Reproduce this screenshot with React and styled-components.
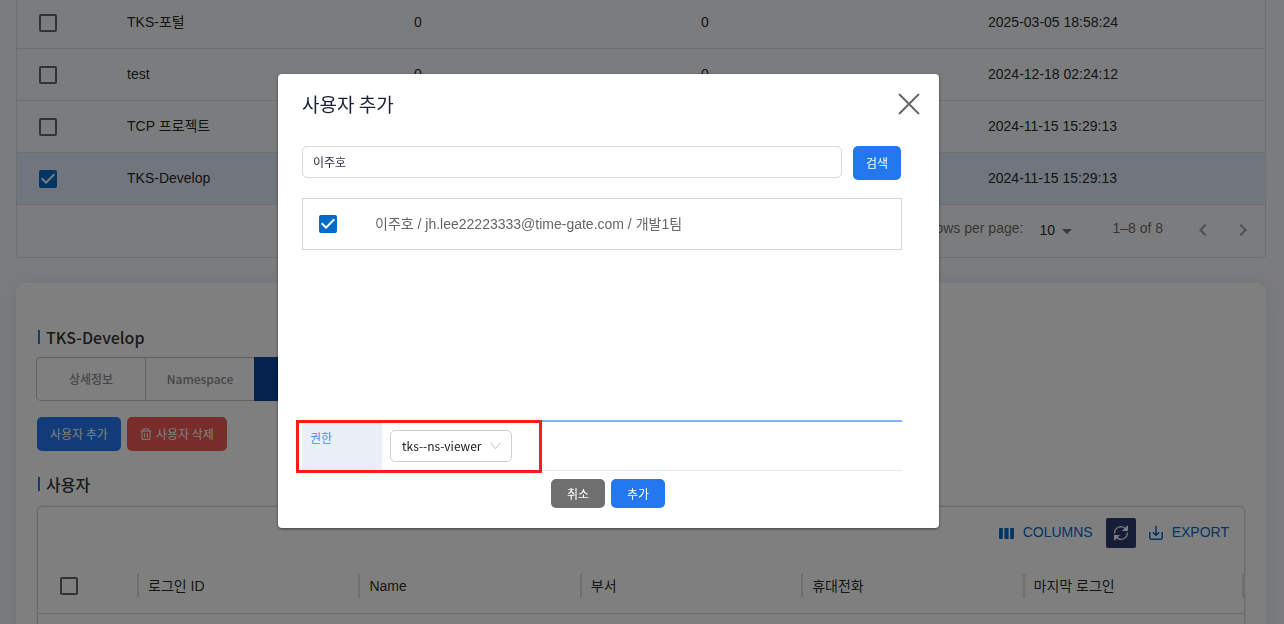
import React from "react";
import styled, { createGlobalStyle } from "styled-components";

const sans = `"Liberation Sans", "Noto Sans CJK KR", sans-serif`;
const noto = `"Noto Sans CJK KR", "Noto Sans", sans-serif`;

const GlobalStyle = createGlobalStyle`
  *, *::before, *::after { box-sizing: border-box; }
  body { margin: 0; background: #f7f8fb; font-family: ${sans}; font-size: 14px; color: rgba(0, 0, 0, 0.87); }
  button, input, select { font: inherit; margin: 0; }
  h1, h2 { margin: 0; }
`;

const Page = styled.div`
  position: relative;
  height: 100vh;
  overflow: hidden;
`;

const Main = styled.main`
  margin: -3px 18px 0 16px;
  display: flex;
  flex-direction: column;
  gap: 25px;
`;

const GridPanel = styled.section`
  border: 1px solid #dcdcdc;
  border-top: 0;
  border-radius: 0 0 4px 4px;
`;

const ProjectTable = styled.table`
  width: 100%;
  table-layout: fixed;
  border-collapse: separate;
  border-spacing: 0;
`;

const ProjectRow = styled.tr`
  height: 52px;
  background: ${(p) => (p.$selected ? "#e3ebfa" : "transparent")};
`;

const Cell = styled.td`
  padding: 0 10px 2px;
  border-bottom: 1px solid #dcdcdc;
  white-space: nowrap;
  line-height: 20px;
`;

const CheckCell = styled.td`
  width: 100px;
  padding: 0 22px;
  border-bottom: 1px solid #dcdcdc;
  line-height: 0;
`;

const CheckInput = styled.input`
  appearance: none;
  width: 18px;
  height: 18px;
  border: 2px solid #666;
  border-radius: 2px;
  &:checked {
    border-color: #006bc9;
    background: #006bc9;
  }
`;

const CheckWrap = styled.span`
  position: relative;
  display: inline-block;
  width: 18px;
  height: 18px;
  line-height: 0;
  svg {
    position: absolute;
    inset: 0;
    pointer-events: none;
  }
`;

const Pager = styled.div`
  height: 52px;
  display: flex;
  align-items: center;
  justify-content: flex-end;
  padding: 0 10px 6px 0;
  color: rgba(0, 0, 0, 0.6);
`;

const PageSizeSelect = styled.select`
  appearance: none;
  border: 0;
  padding: 4px 5px 0 16px;
  background: transparent;
  color: rgba(0, 0, 0, 0.87);
`;

const Caret = styled.svg`
  width: 10px;
  height: 5px;
  margin: 6px 40px 0 2px;
`;

const PageButtons = styled.div`
  display: flex;
  padding-top: 4px;
  margin-left: 28px;
`;

const PageButton = styled.button`
  width: 24px;
  height: 24px;
  padding: 0;
  border: 0;
  background: transparent;
  color: #a0a0a0;
  & + & { margin-left: 16px; }
`;

const DetailCard = styled.section`
  background: #fff;
  border-radius: 10px;
  box-shadow: 0 0 20px rgba(80, 110, 160, 0.12);
  padding: 42px 21px 40px 20px;
`;

const SectionTitle = styled.h2`
  display: flex;
  align-items: center;
  gap: 6px;
  padding-left: 2px;
  font: 500 16px/24px ${noto};
  color: #333;
  &::before {
    content: "";
    width: 2px;
    height: 14px;
    background: #2378ef;
  }
`;

const Tabs = styled.div`
  display: flex;
  margin-top: 8px;
`;

const Tab = styled.button`
  width: 109px;
  height: 44px;
  padding: 0;
  border: 1px solid #c4c4c4;
  border-right-width: ${(p) => (p.$active ? "1px" : "0")};
  border-color: ${(p) => (p.$active ? "#0b429c" : "#c4c4c4")};
  border-radius: ${(p) => (p.$first ? "5px 0 0 5px" : "0")};
  background: ${(p) => (p.$active ? "#0b429c" : "#fff")};
  color: ${(p) => (p.$active ? "#fff" : "#8c8c8c")};
  font: 500 12px/18px ${noto};
`;

const ActionRow = styled.div`
  display: flex;
  gap: 6px;
  margin: 16px 0 21px 1px;
`;

const tones = { primary: "#2378ef", danger: "#ef5a53", neutral: "#707070" };

const Button = styled.button`
  display: inline-flex;
  align-items: center;
  justify-content: center;
  gap: 4px;
  height: ${(p) => (p.$compact ? "29px" : "34px")};
  padding: 0 ${(p) => p.$pad || 13}px;
  border: 0;
  border-radius: 5px;
  background: ${(p) => tones[p.$tone || "primary"]};
  color: #fff;
  font: 400 12px/18px ${noto};
  white-space: nowrap;
`;

const UserGrid = styled.div`
  margin: 10px 0 0 1px;
  border: 1px solid #d6d6d6;
  border-radius: 5px;
  box-shadow: 0 0 2px rgba(0, 0, 0, 0.2);
`;

const Toolbar = styled.div`
  display: flex;
  justify-content: flex-end;
  align-items: center;
  height: 52px;
  padding: 0 15px 0 0;
`;

const ToolButton = styled.button`
  display: flex;
  align-items: center;
  gap: 9px;
  padding: 0;
  border: 0;
  background: transparent;
  color: #006bc9;
  font: 14px/20px ${sans};
  span { padding-bottom: 2px; }
`;

const RefreshButton = styled.button`
  display: grid;
  place-items: center;
  width: 30px;
  height: 30px;
  margin: 0 13px;
  padding: 0;
  border: 0;
  border-radius: 2px;
  background: #2d3f6e;
  color: #fff;
`;

const UserTable = styled.table`
  width: 100%;
  table-layout: fixed;
  border-spacing: 0;
`;

const HeadCell = styled.th`
  width: ${(p) => (p.$check ? "99px" : "auto")};
  height: 55px;
  padding: 0 ${(p) => (p.$check ? "22px" : "0")};
  border-bottom: 1px solid #d6d6d6;
  text-align: left;
  font-weight: 400;
  line-height: ${(p) => (p.$check ? "0" : "20px")};
`;

const HeadLabel = styled.div`
  display: flex;
  align-items: center;
  height: 24px;
  padding-left: 9px;
  border-left: 2px solid #e0e0e0;
  th:last-child > & { border-right: 2px solid #e0e0e0; }
`;

const EmptyCell = styled.td`
  height: 52px;
`;

const Backdrop = styled.div`
  position: fixed;
  inset: 0;
  display: flex;
  justify-content: center;
  align-items: flex-start;
  padding: 74px 67px 0 0;
  background: rgba(0, 0, 0, 0.5);
`;

const Dialog = styled.div`
  width: 661px;
  padding: 15px 37px 20px 24px;
  border-radius: 4px;
  background: #fff;
  box-shadow: 0 1px 3px rgba(0, 0, 0, 0.5);
  font: 12px/18px ${noto};
`;

const DialogHeader = styled.header`
  display: flex;
  justify-content: space-between;
  align-items: center;
  margin-right: -18px;
`;

const DialogTitle = styled.h1`
  font: 400 19px/30px ${noto};
  color: #1b2137;
`;

const CloseButton = styled.button`
  display: block;
  width: 22px;
  height: 22px;
  padding: 0;
  border: 0;
  background: transparent;
  color: #666;
  line-height: 0;
`;

const SearchRow = styled.form`
  display: flex;
  align-items: flex-start;
  gap: 11px;
  margin: 27px 1px 18px 0;
`;

const SearchInput = styled.input`
  flex: 1;
  min-width: 0;
  height: 32px;
  padding: 0 10px 2px;
  border: 1px solid #d9d9d9;
  border-radius: 5px;
  color: #2a3048;
  outline: 0;
`;

const Results = styled.div`
  height: 222px;
`;

const ResultItem = styled.label`
  display: flex;
  align-items: center;
  gap: 38px;
  height: 52px;
  padding: 0 16px;
  border: 1px solid #d6d6d6;
  color: #666;
  font: 14px/20px ${sans};
`;

const RoleRow = styled.div`
  position: relative;
  display: flex;
  height: 51px;
  border-top: 2px solid #83b3f5;
  border-bottom: 1px solid #e8e8e8;
`;

const RoleLabel = styled.label`
  width: 80px;
  padding: 7px 8px;
  background: #e9eef7;
  color: #4a90ee;
`;

const SelectBox = styled.div`
  position: relative;
  margin: 8px;
  svg {
    position: absolute;
    right: 11px;
    top: 12px;
    pointer-events: none;
  }
`;

const RoleSelect = styled.select`
  appearance: none;
  width: 122px;
  height: 32px;
  padding: 0 11px;
  border: 1px solid #d0d0d0;
  border-radius: 5px;
  background: #fff;
  color: #222;
`;

const Highlight = styled.div`
  position: absolute;
  top: -2px;
  left: -6px;
  width: 246px;
  height: 53px;
  border: 3px solid #fc1d15;
  pointer-events: none;
`;

const DialogActions = styled.footer`
  display: flex;
  justify-content: center;
  gap: 6px;
  margin-top: 8px;
  padding-left: 12px;
`;

function Checkbox(props) {
  return (
    <CheckWrap>
      <CheckInput type="checkbox" {...props} />
      {props.defaultChecked && (
        <svg width="18" height="18" viewBox="3 3 18 18" fill="#fff" aria-hidden="true">
          <path d="M10 17l-5-5 1.41-1.41L10 14.17l7.59-7.59L19 8l-9 9z" />
        </svg>
      )}
    </CheckWrap>
  );
}

const TrashIcon = () => (
  <svg width="12" height="12" viewBox="0 0 12 12" fill="none" stroke="currentColor" aria-hidden="true">
    <path d="M.5 3h11M3.700 3V.8h4.600V3M2 3v8.400h8V3M4.700 5v4.500M7.300 5v4.500" />
  </svg>
);

const ColumnsIcon = () => (
  <svg width="15" height="12" viewBox="0 0 15 12" fill="currentColor" aria-hidden="true">
    <path d="M1 1h2.800v11H1a1 1 0 0 1-1-1V2a1 1 0 0 1 1-1zM5.400 1h4.200v11H5.400zM11.200 1H14a1 1 0 0 1 1 1v9a1 1 0 0 1-1 1h-2.800z" />
  </svg>
);

const RefreshIcon = () => (
  <svg width="16" height="16" viewBox="0 0 16 16" fill="none" stroke="currentColor" strokeWidth="1.200" aria-hidden="true">
    <path d="M1.700 8.500A6.200 6.200 0 0 1 12.600 4M14.300 7.500A6.200 6.200 0 0 1 3.400 12" />
    <path d="M14.300 1.500v3.800h-3.800zM1.700 14.500v-3.800h3.800z" fill="currentColor" />
  </svg>
);

const ExportIcon = () => (
  <svg width="14" height="14" viewBox="0 0 14 14" fill="none" stroke="currentColor" strokeWidth="1.500" aria-hidden="true">
    <path d="M.8 6v5.700c0 .9.600 1.500 1.500 1.500h9.400c.9 0 1.500-.6 1.500-1.500V6M7 0v9M3.800 6.200L7 9.400l3.200-3.200" />
  </svg>
);

const ROWS = [
  { name: "TKS-포털", date: "2025-03-05 18:58:24" },
  { name: "test", date: "2024-12-18 02:24:12" },
  { name: "TCP 프로젝트", date: "2024-11-15 15:29:13" },
  { name: "TKS-Develop", date: "2024-11-15 15:29:13", selected: true },
];

const USER_COLUMNS = ["로그인 ID", "Name", "부서", "휴대전화", "마지막 로그인"];

export default function App() {
  return (
    <Page>
      <GlobalStyle />
      <Main>
        <GridPanel>
          <ProjectTable>
            <tbody>
              {ROWS.map((row) => (
                <ProjectRow key={row.name} $selected={row.selected}>
                  <CheckCell>
                    <Checkbox aria-label={row.name} defaultChecked={row.selected} />
                  </CheckCell>
                  <Cell>{row.name}</Cell>
                  <Cell>0</Cell>
                  <Cell>0</Cell>
                  <Cell>{row.date}</Cell>
                </ProjectRow>
              ))}
            </tbody>
          </ProjectTable>
          <Pager>
            <label htmlFor="page-size">Rows per page:</label>
            <PageSizeSelect id="page-size" defaultValue="10">
              <option>10</option>
            </PageSizeSelect>
            <Caret viewBox="0 0 10 5" fill="#707070" aria-hidden="true">
              <path d="M0 0h10L5 5z" />
            </Caret>
            <span>1–8 of 8</span>
            <PageButtons>
              <PageButton aria-label="Previous page">
                <svg width="24" height="24" viewBox="0 0 24 24" fill="currentColor">
                  <path d="M15.410 7.410L14 6l-6 6 6 6 1.410-1.410L10.830 12z" />
                </svg>
              </PageButton>
              <PageButton aria-label="Next page">
                <svg width="24" height="24" viewBox="0 0 24 24" fill="currentColor">
                  <path d="M8.590 16.590L10 18l6-6-6-6-1.410 1.410L13.170 12z" />
                </svg>
              </PageButton>
            </PageButtons>
          </Pager>
        </GridPanel>

        <DetailCard>
          <SectionTitle>TKS-Develop</SectionTitle>
          <Tabs>
            <Tab $first>상세정보</Tab>
            <Tab>Namespace</Tab>
            <Tab $active>사용자</Tab>
          </Tabs>
          <ActionRow>
            <Button>사용자 추가</Button>
            <Button $tone="danger">
              <TrashIcon />
              사용자 삭제
            </Button>
          </ActionRow>
          <SectionTitle>사용자</SectionTitle>
          <UserGrid>
            <Toolbar>
              <ToolButton>
                <ColumnsIcon />
                <span>COLUMNS</span>
              </ToolButton>
              <RefreshButton aria-label="Refresh">
                <RefreshIcon />
              </RefreshButton>
              <ToolButton>
                <ExportIcon />
                <span>EXPORT</span>
              </ToolButton>
            </Toolbar>
            <UserTable>
              <thead>
                <tr>
                  <HeadCell $check>
                    <Checkbox aria-label="Select all users" />
                  </HeadCell>
                  {USER_COLUMNS.map((name) => (
                    <HeadCell key={name}>
                      <HeadLabel>{name}</HeadLabel>
                    </HeadCell>
                  ))}
                </tr>
              </thead>
              <tbody>
                <tr>
                  <EmptyCell colSpan={6} />
                </tr>
              </tbody>
            </UserTable>
          </UserGrid>
        </DetailCard>
      </Main>

      <Backdrop>
        <Dialog role="dialog" aria-modal="true" aria-labelledby="dialog-title">
          <DialogHeader>
            <DialogTitle id="dialog-title">사용자 추가</DialogTitle>
            <CloseButton aria-label="Close">
              <svg width="22" height="22" viewBox="0 0 22 22" fill="none" stroke="currentColor" strokeWidth="2">
                <path d="M1 1l20 20M21 1L1 21" />
              </svg>
            </CloseButton>
          </DialogHeader>
          <SearchRow onSubmit={(e) => e.preventDefault()}>
            <SearchInput aria-label="사용자 검색" defaultValue="이주호" />
            <Button type="submit">검색</Button>
          </SearchRow>
          <Results>
            <ResultItem>
              <Checkbox defaultChecked />
              <span>이주호 / jh.lee22223333@time-gate.com / 개발1팀</span>
            </ResultItem>
          </Results>
          <RoleRow>
            <RoleLabel htmlFor="role">권한</RoleLabel>
            <SelectBox>
              <RoleSelect id="role" defaultValue="tks--ns-viewer">
                <option>tks--ns-viewer</option>
              </RoleSelect>
              <svg width="11" height="8" viewBox="0 0 11 8" fill="none" stroke="#bfbfbf" aria-hidden="true">
                <path d="M.8.8l4.700 6 4.700-6" />
              </svg>
            </SelectBox>
            <Highlight />
          </RoleRow>
          <DialogActions>
            <Button $compact $tone="neutral" $pad={16}>취소</Button>
            <Button $compact $pad={16}>추가</Button>
          </DialogActions>
        </Dialog>
      </Backdrop>
    </Page>
  );
}
